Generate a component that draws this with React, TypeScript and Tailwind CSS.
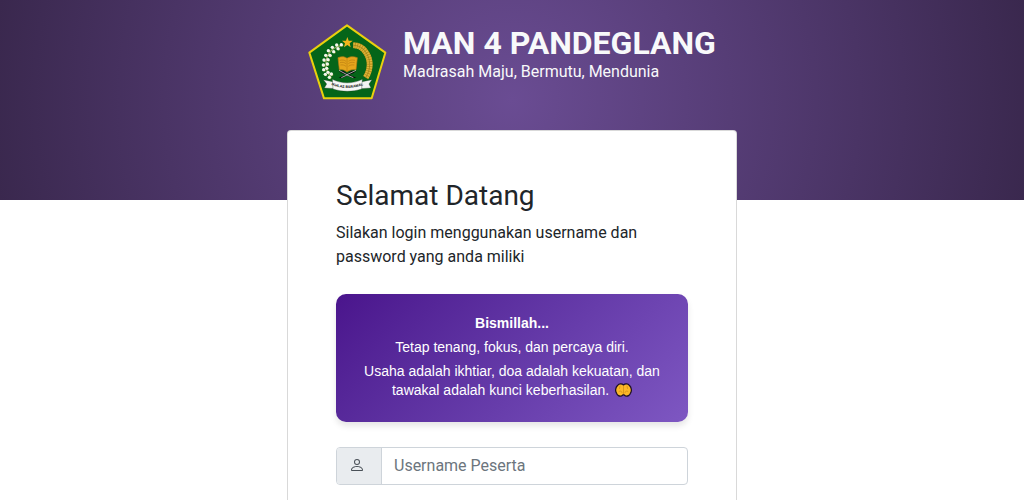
import { BsPerson } from 'react-icons/bs'

// [x, y] of each cotton bud, from the top of the branch down
const cottonBuds = [
  [124, 86],
  [110, 87],
  [114, 98],
  [97, 94],
  [101, 107],
  [85, 104],
  [90, 118],
  [77, 118],
  [84, 131],
  [72, 132],
  [82, 144],
  [70, 147],
  [80, 157],
  [71, 161],
  [84, 169],
  [76, 175],
  [94, 174],
  [88, 184],
]

function Logo() {
  return (
    <svg
      viewBox="21 18 240 240"
      role="img"
      aria-label="Ikhlas Beramal"
      className="w-20 h-20 shrink-0"
    >
      <path
        d="M141 28 256 110 215 247H72L28 110Z"
        fill="#056519"
        stroke="#ead00e"
        strokeWidth="6"
        strokeLinejoin="round"
      />

      {/* cotton branch */}
      <path
        d="M128 89C99 91 80 113 78 138c-1 19 4 35 16 47"
        fill="none"
        stroke="#8fae5d"
        strokeWidth="4"
      />
      {cottonBuds.map(([x, y]) => (
        <g key={`${x}-${y}`}>
          <circle cx={x + 2} cy={y + 2} r="4" fill="#7d9a3a" />
          <circle cx={x} cy={y} r="5" fill="#f4f6ec" />
        </g>
      ))}

      {/* rice ear */}
      <path
        d="M160 88c15 0 29 8 37 20 16 22 16 52 0 77"
        fill="none"
        stroke="#bd9219"
        strokeWidth="18"
      />
      <path
        d="M160 88c15 0 29 8 37 20 16 22 16 52 0 77"
        fill="none"
        stroke="#dfb63d"
        strokeWidth="16"
        strokeDasharray="4 3"
      />
      <path
        d="M160 88c15 0 29 8 37 20 16 22 16 52 0 77"
        fill="none"
        stroke="#947c18"
        strokeWidth="2"
      />

      <path
        d="m142 63 4 11 12 .5-9 7 3 12-10-6.500-10 6.500 3-12-9-7 12-.5Z"
        fill="#f0b51d"
      />

      {/* book on its stand */}
      <path
        d="M116 164h14l12 9 12-9h15c-6 8-14 9-22 12l22 9-10 2-17-8-17 8-9-2 21-9c-9-3-15-5-21-12Z"
        fill="#0b0d0b"
      />
      <path
        d="M124 185l17-8 19 8M117 163l24 13 27-13"
        fill="none"
        stroke="#f4f6f4"
        strokeWidth="2"
      />
      <path
        d="M114 125c12-5 21-3 27 2 7-5 18-7 31-2l-4 36c-11-2-20 1-27 7-7-6-14-9-23-7Z"
        fill="#e4a51c"
        stroke="#b97c10"
        strokeWidth="2"
      />
      <path
        d="M141 129v37M119 133c9-2 14-1 19 3M120 140c8-2 13-1 18 3M121 147c7-1 12 0 17 4M165 133c-9-2-15-1-20 3M164 140c-8-2-14-1-19 3M163 147c-8-1-13 0-18 4"
        fill="none"
        stroke="#b97c10"
        strokeWidth="2"
      />

      {/* ribbon */}
      <path
        d="M98 197 70 191l10 13-7 12 34 2M186 197l30-6-9 13 6 12-30 2"
        fill="#f2f4f2"
        stroke="#16301a"
        strokeWidth="1"
      />
      <path
        d="M97 190c27 14 62 14 90 0l-2 29c-27 9-59 9-86 0Z"
        fill="#f7f8f7"
        stroke="#16301a"
        strokeWidth="1"
      />
      <path id="motto" d="M94 207c30 12 66 12 96 0" fill="none" />
      <text
        fill="#111"
        className="font-['Liberation_Sans',sans-serif] text-[11px] font-bold"
        textAnchor="middle"
      >
        <textPath href="#motto" startOffset="50%">
          IKHLAS BERAMAL
        </textPath>
      </text>
    </svg>
  )
}

function PalmsUp() {
  return (
    <svg
      viewBox="0 0 34 28"
      aria-hidden="true"
      className="inline-block w-[17px] h-3.5 ml-0.5 align-[-2px]"
    >
      <path
        d="M17 4C14 1 8 1 5 5 1 9 0 16 3 20c1 5 6 7 10 6l4-3 4 3c4 1 9-1 10-6 3-4 2-11-2-15-3-4-9-4-12-1Z"
        fill="#fcb827"
        stroke="#1d1024"
        strokeWidth="2.500"
        strokeLinejoin="round"
      />
      <path
        d="M17 6v16M10 6l-1 5M24 6l1 5M8 17c3-2 5-1 6 2M26 17c-3-2-5-1-6 2"
        fill="none"
        stroke="#d18f1a"
        strokeWidth="1.500"
        strokeLinecap="round"
      />
    </svg>
  )
}

function Header() {
  return (
    <header className="h-[200px] pt-[22px] bg-[radial-gradient(circle,#6a4c93,#3a284e)]">
      <div className="flex gap-4 justify-center pr-px">
        <Logo />
        <div className="pt-0.5 text-[#f8f9fa]">
          <h1 className="text-[32px] leading-[38px] font-bold">
            MAN 4 PANDEGLANG
          </h1>
          <p className="text-base leading-5">Madrasah Maju, Bermutu, Mendunia</p>
        </div>
      </div>
    </header>
  )
}

function Quote() {
  return (
    <div className="flex flex-col gap-[5px] my-[25px] px-5 pt-5 pb-[22px] rounded-[10px] bg-linear-135 from-[#4a148c] to-[#7e57c2] shadow-[0_4px_6px_rgba(0,0,0,0.1)] font-['Liberation_Sans',Arial,sans-serif] text-sm leading-[19px] text-center text-white">
      <strong>Bismillah...</strong>
      <p>Tetap tenang, fokus, dan percaya diri.</p>
      <p>
        Usaha adalah ikhtiar, doa adalah kekuatan, dan tawakal adalah kunci
        keberhasilan. <PalmsUp />
      </p>
    </div>
  )
}

export default function App() {
  return (
    <div className="h-screen overflow-x-hidden bg-white font-[Roboto,sans-serif] text-[#212529]">
      <Header />
      <main className="relative max-w-[450px] mx-auto -mt-[70px] p-12 bg-white border border-black/15 rounded">
        <h2 className="text-[28px] leading-[34px] mb-2">Selamat Datang</h2>
        <p>Silakan login menggunakan username dan password yang anda miliki</p>
        <Quote />
        <form>
          <div className="flex border border-[#ced4da] rounded overflow-hidden">
            <label
              htmlFor="username"
              aria-label="Username Peserta"
              className="flex items-center pl-3 pr-4 pb-0.5 bg-[#e9ecef] border-r border-[#ced4da] text-[#495057]"
            >
              <BsPerson size={16} />
            </label>
            <input
              id="username"
              name="username"
              type="text"
              placeholder="Username Peserta"
              className="flex-1 min-w-0 h-9 px-3 pb-0.5 outline-none placeholder:text-[#6c757d]"
            />
          </div>
        </form>
      </main>
    </div>
  )
}
